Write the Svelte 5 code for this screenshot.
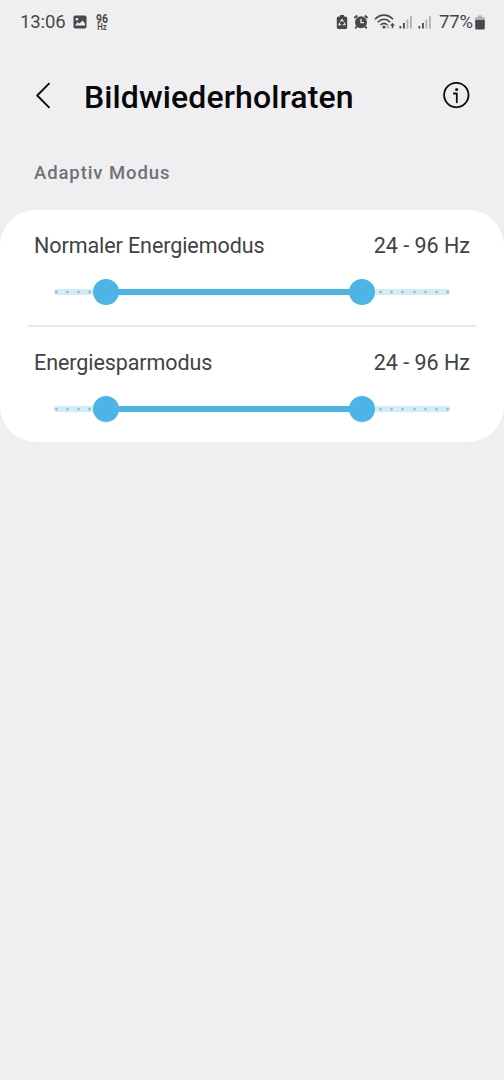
<script>
  const MIN_RATE = 10;
  const MAX_RATE = 120;
  const ticks = Array.from({ length: 36 }, (_, i) => i);

  let modes = [
    { name: "Normaler Energiemodus", low: 24, high: 96 },
    { name: "Energiesparmodus", low: 24, high: 96 },
  ];

  const percent = (rate) => ((rate - MIN_RATE) / (MAX_RATE - MIN_RATE)) * 100;
</script>

<div class="screen">
  <div class="statusbar">
    <div class="left">
      <span class="clock">13:06</span>
      <svg class="picture" width="14" height="14" viewBox="0 0 14 14">
        <rect x="0.5" y="0.5" width="13" height="13" rx="1.8" fill="#48484a" />
        <path d="M2 10.5 4.5 7.2 6.5 8.6 9.5 5.5 12 8.5V10.5Z" fill="#efeff1" />
        <circle cx="4" cy="4.2" r="1.3" fill="#efeff1" />
      </svg>
      <div class="rate">
        <b>96</b>
        <span>Hz</span>
      </div>
    </div>
    <div class="right">
      <svg width="12" height="16" viewBox="0 0 12 16">
        <path d="M4 1h4v1.5h1.6a1.6 1.6 0 0 1 1.6 1.6v9.3a1.6 1.6 0 0 1-1.6 1.6H2.4a1.6 1.6 0 0 1-1.6-1.6V4.1A1.6 1.6 0 0 1 2.4 2.5H4Z" fill="#48484a" />
        <path d="M4.5 7.6 6 5.5 7.5 7.6M8.3 8.6 9 10.7H6.7M5.2 10.7H3L3.8 8.6" fill="none" stroke="#efeff1" stroke-width="1.1" />
      </svg>
      <svg class="alarm" width="16" height="16" viewBox="0 0 16 16">
        <path d="M1.4 4 4.3 1.6M14.6 4 11.7 1.6M3.8 12.6 2.3 14.3M12.2 12.6 13.7 14.3" stroke="#48484a" stroke-width="2" />
        <circle cx="8" cy="8.3" r="6" fill="#48484a" />
        <path d="M8 4.7V8.7H11" fill="none" stroke="#efeff1" stroke-width="1.3" />
      </svg>
      <svg class="wifi" width="22" height="16" viewBox="0 0 22 16">
        <g fill="none" stroke="#48484a" stroke-width="1.6">
          <path d="M1 5.2C6-0.3 14-0.3 19 5.2" />
          <path d="M3.8 8.2C7.5 4.3 12.5 4.3 16.2 8.2" />
          <path d="M6.5 11C8.7 8.9 11.3 8.9 13.5 11" />
        </g>
        <circle cx="10" cy="13" r="1.6" fill="#48484a" />
        <path d="M14 10.5V14M12.4 12.6 14 14.4 15.6 12.6" fill="none" stroke="#b8b8ba" stroke-width="1.2" />
        <path d="M18.5 14.2V10.5" stroke="#48484a" stroke-width="1.5" />
        <path d="M16.1 11.8 18.5 8.8 20.9 11.8Z" fill="#48484a" />
      </svg>
      {#each [0, 1] as sim}
        <svg class="signal" class:second={sim === 1} width="14" height="14" viewBox="0 0 14 14">
          <rect x="0.5" y="11" width="1.8" height="2.5" fill="#48484a" />
          <rect x="4" y="8" width="1.8" height="5.5" fill="#48484a" />
          <rect x="7.5" y="4.5" width="1.8" height="9" fill="#b2b2b4" />
          <rect x="11" y="1" width="1.8" height="12.5" fill="#b2b2b4" />
        </svg>
      {/each}
      <span class="charge">77%</span>
      <svg class="battery" width="10" height="15" viewBox="0 0 10 15">
        <path d="M3 0.5h4v1.5h1.5a1.3 1.3 0 0 1 1.3 1.3V5H0.2V3.3A1.3 1.3 0 0 1 1.5 2H3Z" fill="#b2b2b4" />
        <path d="M0.2 5H9.8v8.2a1.3 1.3 0 0 1-1.3 1.3h-7a1.3 1.3 0 0 1-1.3-1.3Z" fill="#48484a" />
      </svg>
    </div>
  </div>

  <header>
    <button class="back" aria-label="Zurück">
      <svg width="16" height="28" viewBox="0 0 16 28">
        <path d="M14 1.7 2.2 13.5 14 25.3" fill="none" stroke="#0b0b0d" stroke-width="1.9" stroke-linecap="round" stroke-linejoin="round" />
      </svg>
    </button>
    <h1>Bildwiederholraten</h1>
    <button class="info" aria-label="Info">
      <svg width="28" height="28" viewBox="0 0 28 28">
        <circle cx="14.3" cy="13.1" r="12.2" fill="none" stroke="#0b0b0d" stroke-width="1.8" />
        <circle cx="14.6" cy="7.6" r="1.5" fill="#0b0b0d" />
        <path d="M11.8 11.5H14.8V20.3" fill="none" stroke="#0b0b0d" stroke-width="1.8" stroke-linecap="round" stroke-linejoin="round" />
      </svg>
    </button>
  </header>

  <h2>Adaptiv Modus</h2>

  <section class="card">
    {#each modes as mode}
      <div class="mode">
        <div class="label">
          <span class="name">{mode.name}</span>
          <span class="value">{mode.low} - {mode.high} Hz</span>
        </div>
        <div class="slider">
          <div class="ticks">
            {#each ticks as tick (tick)}
              <i></i>
            {/each}
          </div>
          <div class="rail">
            <div
              class="range"
              style="left: {percent(mode.low)}%; right: {100 - percent(mode.high)}%"
            ></div>
            <div class="thumb" style="left: {percent(mode.low)}%"></div>
            <div class="thumb" style="left: {percent(mode.high)}%"></div>
          </div>
        </div>
      </div>
    {/each}
  </section>
</div>

<style>
  :global(body) {
    background-color: #efeff1;
  }

  .screen {
    min-height: 1080px;
    background-color: #efeff1;
    font-family: Roboto, sans-serif;
    color: #404247;
  }

  .statusbar {
    display: flex;
    justify-content: space-between;
    height: 44px;
    padding: 0 19px 0 20px;
    box-sizing: border-box;
    font-size: 18.5px;
    color: #48484a;
  }

  .left,
  .right {
    display: flex;
    align-items: center;
  }

  .clock {
    width: 46px;
    white-space: nowrap;
    letter-spacing: -0.1px;
  }

  .picture {
    margin-left: 7px;
  }

  /* current refresh rate, stacked and condensed */
  .rate {
    display: flex;
    flex-direction: column;
    align-items: center;
    margin: 0 0 0 8px;
    font-size: 12px;
    transform: scaleX(0.86);
  }

  .rate b {
    height: 8px;
    line-height: 8px;
  }

  .rate span {
    height: 7px;
    font-size: 9px;
    line-height: 8px;
    font-weight: 600;
  }

  .alarm {
    margin-left: 5px;
  }

  .wifi {
    margin-left: 5px;
  }

  .signal {
    margin-left: 3px;
  }

  .signal.second {
    margin-left: 5px;
  }

  .charge {
    margin-left: 7px;
    letter-spacing: -0.15px;
  }

  .battery {
    margin-left: 2px;
  }

  header {
    display: flex;
    align-items: center;
    height: 104px;
    padding: 0 34px 0 35px;
  }

  button {
    display: flex;
    padding: 0;
    border: none;
    background: none;
  }

  .info {
    margin-left: auto;
  }

  h1 {
    margin: 1px 0 0 33px;
    font-size: 32px;
    line-height: 40px;
    font-weight: 500;
    letter-spacing: 0.1px;
    color: #08080a;
  }

  h2 {
    height: 50px;
    margin: 0;
    padding: 12px 34px 0;
    font-size: 18.5px;
    line-height: 26px;
    font-weight: 500;
    letter-spacing: 0.9px;
    color: #707276;
  }

  .card {
    height: 232px;
    border-radius: 36px;
    background-color: #fff;
  }

  .mode {
    height: 117px;
    margin: 0 28px;
    padding: 20px 6px 0;
    box-sizing: border-box;
  }

  .mode:first-child {
    border-bottom: 2px solid #e9e9ea;
  }

  .label {
    display: flex;
    justify-content: space-between;
    font-size: 21.5px;
    line-height: 31px;
  }

  .name {
    letter-spacing: -0.08px;
  }

  .slider {
    position: relative;
    height: 6px;
    margin: 28px 20px 0;
    border-radius: 2px;
    background-color: #d2edf8;
  }

  .ticks {
    display: flex;
    justify-content: space-between;
    align-items: center;
    height: 6px;
    padding: 0 0.5px;
    transform: translateY(-0.5px);
  }

  .ticks i {
    width: 3px;
    height: 3px;
    border-radius: 50%;
    background-color: #94c5d8;
  }

  .rail {
    position: absolute;
    top: 0;
    left: 2px;
    right: 2px;
    height: 6px;
  }

  .range {
    position: absolute;
    top: 0;
    bottom: 0;
    background-color: #4cb5e6;
  }

  .thumb {
    position: absolute;
    top: 3px;
    width: 26px;
    height: 26px;
    border-radius: 50%;
    background-color: #4cb5e6;
    transform: translate(-50%, -50%);
  }
</style>
